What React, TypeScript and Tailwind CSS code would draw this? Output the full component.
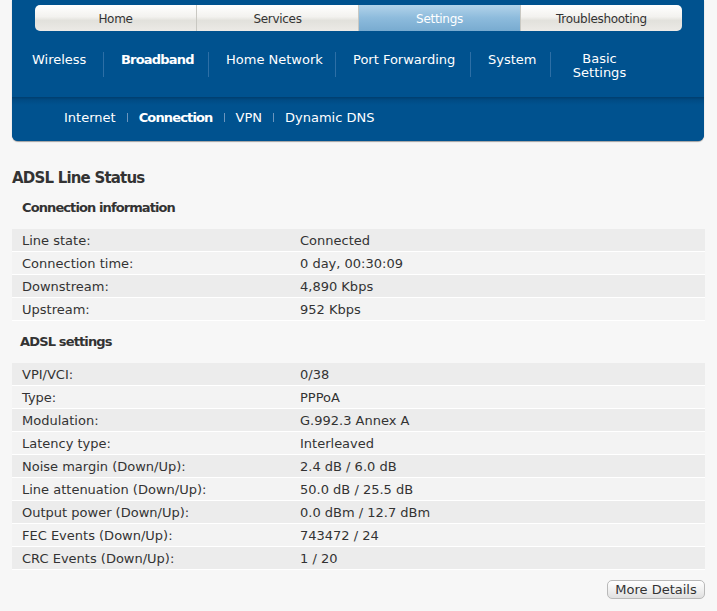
const TOP_TABS = ["Home", "Services", "Settings", "Troubleshooting"];

const MAIN_NAV = [
  { label: "Wireless", width: "w-[88px]", bold: false },
  { label: "Broadband", width: "w-[105px]", bold: true },
  { label: "Home Network", width: "w-[127px]", bold: false },
  { label: "Port Forwarding", width: "w-[135px]", bold: false },
  { label: "System", width: "w-[80px]", bold: false },
];
const SUB_NAV = ["Internet", "Connection", "VPN", "Dynamic DNS"];

const CONNECTION_INFO: [string, string][] = [
  ["Line state:", "Connected"],
  ["Connection time:", "0 day, 00:30:09"],
  ["Downstream:", "4,890 Kbps"],
  ["Upstream:", "952 Kbps"],
];

const ADSL_SETTINGS: [string, string][] = [
  ["VPI/VCI:", "0/38"],
  ["Type:", "PPPoA"],
  ["Modulation:", "G.992.3 Annex A"],
  ["Latency type:", "Interleaved"],
  ["Noise margin (Down/Up):", "2.4 dB / 6.0 dB"],
  ["Line attenuation (Down/Up):", "50.0 dB / 25.5 dB"],
  ["Output power (Down/Up):", "0.0 dBm / 12.7 dBm"],
  ["FEC Events (Down/Up):", "743472 / 24"],
  ["CRC Events (Down/Up):", "1 / 20"],
];

function StatusTable({ rows }: { rows: [string, string][] }) {
  return (
    <div className="mr-3 flex flex-col">
      {rows.map(([label, value], i) => (
        <div
          key={label}
          className={
            "flex h-[23px] items-center border-b border-white pt-[2px] " +
            (i % 2 === 0 ? "bg-[#ececec]" : "bg-[#f3f3f3]")
          }
        >
          <div className="w-[288px] pl-[10px]">{label}</div>
          <div>{value}</div>
        </div>
      ))}
    </div>
  );
}

export default function App() {
  return (
    <div
      className="min-h-[611px] w-[717px] bg-[#f7f7f7] text-[13px] text-[#333]"
      style={{ fontFamily: '"DejaVu Sans", Verdana, sans-serif' }}
    >
      <div className="mx-3 w-[692px] rounded-b-[6px] bg-[#00528f] shadow-[0_1px_1px_rgba(0,0,0,0.35)]">
        <div className="pl-[23px] pt-[5px]">
          <div className="flex h-[26px] w-[647px] overflow-hidden rounded-[5px]">
            {TOP_TABS.map((t, i) => (
              <div
                key={t}
                className={
                  "flex flex-1 items-center justify-center pt-[2px] text-[12px] tracking-[-0.3px] " +
                  (i > 0 ? "border-l border-[#c9c8c2] " : "") +
                  (t === "Settings"
                    ? "bg-[linear-gradient(#b2d3ea,#8dbbdc_50%,#78abd0)] text-white"
                    : "bg-[linear-gradient(#ffffff,#f3f2ef_45%,#e2e1dc_60%,#eceae6)] text-[#333]")
                }
              >
                {t}
              </div>
            ))}
          </div>
        </div>

        <div className="flex h-[66px] items-start pl-[3px] pt-[21px] text-white">
          {MAIN_NAV.map((item, i) => (
            <div
              key={item.label}
              className={
                "flex h-[25px] items-start pl-[17px] leading-[15px] " +
                item.width +
                (i > 0 ? " border-l border-[#2d6fa6]" : "") +
                (item.bold ? " font-bold tracking-[-0.8px]" : "")
              }
            >
              {item.label}
            </div>
          ))}
          <div className="flex h-[25px] w-[98px] flex-col items-center border-l border-[#2d6fa6] leading-[14px]">
            <span>Basic</span>
            <span>Settings</span>
          </div>
        </div>

        <div className="h-[44px] rounded-b-[6px] bg-[linear-gradient(#003e6e,#004b84_3px,#00528f_8px)] pl-[52px] pt-[11px]">
          <div className="flex items-center text-white">
            {SUB_NAV.map((item, i) => (
              <div key={item} className="flex items-center">
                {i > 0 && <div className="mx-[11px] h-[9px] w-px bg-[#6c95bd]" />}
                <span className={item === "Connection" ? "font-bold tracking-[-0.85px]" : ""}>{item}</span>
              </div>
            ))}
          </div>
        </div>
      </div>

      <h1 className="ml-3 mt-[28px] text-[15px] font-bold leading-[18px] tracking-[-0.8px]">
        ADSL Line Status
      </h1>
      <h2 className="ml-[22px] mt-[13px] font-bold leading-[16px] tracking-[-0.9px]">
        Connection information
      </h2>
      <div className="ml-3 mt-[13px]">
        <StatusTable rows={CONNECTION_INFO} />
      </div>

      <h2 className="ml-5 mt-[13px] font-bold leading-[16px] tracking-[-0.85px]">ADSL settings</h2>
      <div className="ml-3 mt-[13px]">
        <StatusTable rows={ADSL_SETTINGS} />
      </div>

      <div className="mr-3 mt-[10px] flex justify-end">
        <button className="h-[19px] w-[98px] rounded-[5px] border border-[#b9b9b9] bg-[linear-gradient(#ffffff,#f1f1f1_50%,#e0e0e0)] text-[13px] leading-[17px] text-[#333]">
          More Details
        </button>
      </div>
    </div>
  );
}
